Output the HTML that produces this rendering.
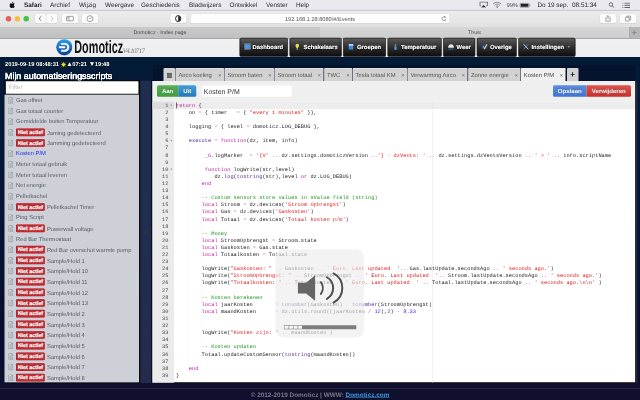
<!DOCTYPE html>
<html lang="nl">
<head>
<meta charset="utf-8">
<title>Domoticz - Index page</title>
<style>
*{box-sizing:border-box;margin:0;padding:0}
html,body{width:640px;height:400px;overflow:hidden;background:#0b1b3a;font-family:"Liberation Sans",sans-serif;text-rendering:geometricPrecision}
i,em{font-style:normal}
#root{position:absolute;left:0;top:0;width:2560px;height:1600px;overflow:hidden;transform:scale(.25);transform-origin:0 0}
#wrap{position:absolute;left:0;top:0;width:640px;height:400px;overflow:hidden;filter:saturate(1.001)}
/* ---------- mac menu bar ---------- */
#menubar{position:absolute;left:0;top:0;width:2560px;height:41.6px;background:#e9e9ef;border-bottom:3.6px solid #d4d4dd}
#menubar span{position:absolute;top:3.6px;font-size:25.6px;line-height:30px;color:#2a2a2e;white-space:nowrap}
#menubar span.b{font-weight:bold;color:#1c1c20}
#menubar svg{position:absolute}
/* ---------- safari toolbar ---------- */
#toolbar{position:absolute;left:0;top:41.6px;width:2560px;height:66.4px;background:linear-gradient(#ececec,#e1e1e1)}
.tbtn{position:absolute;top:14.4px;height:36.8px;background:#fbfbfb;border-radius:7.6px;box-shadow:0 0 0 1.2px #dcdcdc,0 1.6px 2.4px rgba(0,0,0,.22)}
.tbtn svg{position:absolute;left:0;top:0;width:100%;height:100%}
.dot{position:absolute;top:22.4px;width:21.6px;height:21.6px;border-radius:50%}
#url{position:absolute;left:762px;top:14.4px;width:1036px;height:36.8px;background:#fdfdfd;border-radius:7.6px;box-shadow:0 0 0 1.2px #dcdcdc,0 1.6px 2.4px rgba(0,0,0,.22)}
#url span{position:absolute;left:0;width:1036px;text-align:center;top:5.6px;font-size:22.4px;line-height:26.4px;color:#555}
/* ---------- safari tab bar ---------- */
#tabbar{position:absolute;left:0;top:108px;width:2560px;height:44px;background:linear-gradient(#c9c9c9,#c0c0c0)}
#tabbar span{position:absolute;top:8px;font-size:21.2px;line-height:26px;color:#4a4a4a;white-space:nowrap;text-align:center}
/* ---------- page header ---------- */
#hdr{position:absolute;left:0;top:152px;width:2560px;height:76px;background:linear-gradient(#f1f1f1,#eeeeee);border-top:2.4px solid #c9c9c9}
.nav{position:absolute;top:-2.4px;height:74.4px;border-radius:6.4px;background:linear-gradient(#5c5c5c 0%,#474747 22%,#2e2e2e 52%,#1a1a1a 80%,#0e0e0e 100%);box-shadow:inset 0 0 0 2.4px #1c1c1c,0 0 0 1.2px #222}
.nav b{position:absolute;top:22.4px;font-size:23.4px;line-height:28px;color:#fff;white-space:nowrap;text-shadow:0 0 6px #000,0 2.4px 4px #000;-webkit-text-stroke:0.6px #fff}
.nav svg{position:absolute;left:17.6px;top:21.6px;width:26px;height:28px}
#logo{position:absolute;left:224px;top:2.4px;width:66.4px;height:66.4px}
#brand{position:absolute;left:296.8px;top:-1.6px;font-size:72px;line-height:72px;font-weight:bold;color:#111;transform:scaleX(0.6);transform-origin:0 0;letter-spacing:0.4px;white-space:nowrap}
#ver{position:absolute;left:491.2px;top:36px;font-family:"Liberation Serif",serif;font-style:italic;font-size:27.2px;letter-spacing:-2.4px;line-height:28px;color:#777;white-space:nowrap}
/* ---------- body ---------- */
#main{position:absolute;left:0;top:228px;width:2560px;height:1372px;background:linear-gradient(#041b37 0%,#041637 42%,#0a0d2f 84%,#10102e 100%)}
#clock{position:absolute;left:20px;top:241.6px;font-size:23px;line-height:28px;font-weight:bold;color:#fff;white-space:nowrap;text-shadow:0 0 4px #000}
.tri{font-size:26.4px;letter-spacing:-1.6px}
#ttl{position:absolute;left:20px;top:283.6px;font-size:35.6px;line-height:42px;color:#fff;-webkit-text-stroke:1px #fff;white-space:nowrap;text-shadow:0 0 2px #fff,0 0 2px #fff,1.6px 1.6px 3.2px #000}
#filter{position:absolute;left:20px;top:322.4px;width:536.8px;height:56px;background:rgba(255,255,255,.996);border:3.2px solid #0a0a0a;border-radius:2px}
#filter span{position:absolute;left:12px;top:8.8px;font-size:24.8px;line-height:28px;color:#bcbcbc}
#list{position:absolute;left:20px;top:377.6px;width:536.8px;height:1153.2px;background:#d1d3db;overflow:hidden}
.it{position:absolute;left:0;width:2560px;height:42.668px;white-space:nowrap}
.it .fi{position:absolute;left:32.8px;top:8.8px;width:20px;height:26.4px}
.it span{position:absolute;top:6.4px;font-size:23.12px;line-height:28px;color:#555a63}
.it .t1{left:64px}
.it .t1.act{color:#1a2cf0}
.it .t2{left:187.6px;margin-top:1.6px}
.it .na{position:absolute;left:64.4px;top:6.4px;width:114.8px;height:30.8px;border-radius:5.2px;background:rgba(198,45,53,.996);box-shadow:inset 0 0 0 2.4px #a91d24;color:#fff;font-size:21.2px;line-height:32.4px;-webkit-text-stroke:0.8px #fff;text-align:center;font-weight:bold;text-shadow:0 -1.2px 0 rgba(0,0,0,.3)}
#split{position:absolute;left:560.8px;top:321.6px;width:44px;height:1211.6px;background:linear-gradient(#1f2e4f 0%,#1f2d4e 55%,#262b4c 100%)}
#rstrip{position:absolute;left:2544px;top:324px;width:6.4px;height:1208px;background:rgba(255,255,255,.09)}
#split i{position:absolute;left:13.6px;top:590.4px;font-size:28px;line-height:32px;color:#3c3a3c;font-weight:bold}
/* ---------- editor ---------- */
#tabrow{position:absolute;left:612px;top:260px;width:1928.8px;height:64.8px;background:#04142f}
#tlist{position:absolute;left:654.4px;top:272px;width:45.6px;height:52.8px;background:#d4d4d4;border-radius:4px 4px 0 0}
.tab{position:absolute;top:272px;height:52.8px;background:#d2d2d2;border-radius:4px 4px 0 0;box-shadow:inset 1.6px 1.6px 0 #eee}
.tab span{position:absolute;left:11.2px;top:15.2px;font-size:23.4px;line-height:26px;color:#555;white-space:nowrap}
.tab em{position:absolute;right:10.4px;top:15.6px;font-size:21.6px;line-height:26px;color:#555}
.tab.on{background:#efefef}
.tab.on span{color:#444}
#tplus{position:absolute;left:2268px;top:272px;width:45.6px;height:52.8px;background:#d2d2d2;border-radius:4px 4px 0 0}
#panel{position:absolute;left:610.4px;top:324px;width:1932.8px;height:1208px;background:#fff;border-right:3.2px solid #000;border-bottom:3.2px solid #000}
#ebar{position:absolute;left:0;top:0;width:100%;height:83.2px;background:#efefef}
#gutter{position:absolute;left:0;top:83.2px;width:85.2px;height:1124px;background:#ebebeb}
#galine{position:absolute;left:0;top:83.2px;width:85.2px;height:28.4px;background:#dcdcdc}
#pm{position:absolute;left:1118.4px;top:83.2px;width:2px;height:1124px;background:#e4e4e4}
.btn{position:absolute;top:341.2px;height:46px;font-size:24.2px;line-height:46px;font-weight:bold;color:#fff;text-align:center;text-shadow:0 -1.2px 1.2px rgba(0,0,0,.35)}
#nm{position:absolute;left:807.2px;top:340.4px;width:361.6px;height:47.2px;background:rgba(255,255,255,.996);border:1.6px solid #e2e2e2;border-radius:5.6px}
#nm span{position:absolute;left:6.8px;top:7.2px;font-size:27.8px;line-height:32px;color:#333}
.gn{position:absolute;left:608.8px;width:64.8px;text-align:right;font-family:"Liberation Mono",monospace;font-size:21.332px;line-height:28.444px;color:#444}
.fold{position:absolute;left:680.8px;width:0;height:0;border-left:4px solid transparent;border-right:4px solid transparent;border-top:5.6px solid #777}
pre.cl{position:absolute;left:704px;font-family:"Liberation Mono",monospace;font-size:21.332px;line-height:28.444px;color:#222;white-space:pre}
.k{color:#c31aa8}.s{color:#e21a1c}.c{color:#1c9a1c}.n{color:#4a1ce0}.f{color:#5a2a98}.o{color:#cf3aae}
.ig{position:absolute;width:1.6px;height:28.444px;background:rgba(0,0,0,.09)}
#cursor{position:absolute;left:703.6px;top:408.8px;width:2px;height:25.6px;background:#000}
/* ---------- HUD ---------- */
#hud{position:absolute;left:1101.6px;top:996.8px;width:354.4px;height:354.4px;border-radius:32px;background:rgba(236,236,236,.64)}
#hud svg{position:absolute;left:0;top:0;width:354.4px;height:354.4px}
/* ---------- footer ---------- */
#foot{position:absolute;left:0;top:1533.6px;width:2560px;height:66.4px;background:none}
#foot div{position:absolute;left:0;top:18.8px;width:2560px;height:2.4px;background:#2c2b3c}
#foot p{position:absolute;left:0;top:32.8px;width:2560px;text-align:center;font-size:25.6px;line-height:28.8px;font-weight:bold;color:#777a86;white-space:nowrap}
#foot p u{color:#3d9be0}
</style>
</head>
<body>
<div id="wrap"><div id="root">
<div id="main"></div>
<div id="menubar">
<svg style="left:38.4px;top:5.6px;width:22.4px;height:28px" viewBox="0 0 16 20"><path d="M11.2 0.3c.1 1.2-.4 2.4-1.100 3.200-.8.9-1.900 1.500-3 1.400-.1-1.200.5-2.400 1.100-3.100.8-.9 2.100-1.500 3-1.500zM14.700 7c-.7.400-2.100 1.400-2.100 3.400 0 2.400 2.100 3.200 2.500 3.400-.1.200-.4 1.400-1.300 2.700-.8 1.100-1.600 2.300-2.900 2.300-1.200 0-1.600-.7-3-.7s-1.900.7-3 .8c-1.200 0-2.200-1.200-3-2.400C.3 14.200-.9 10.200.8 7.500c.8-1.400 2.300-2.200 3.800-2.200 1.200 0 2.300.8 3 .8s2-1 3.500-.9c.6 0 2.300.2 3.600 1.800z" fill="#111"/></svg>
<span class="b" style="left:96px">Safari</span>
<span style="left:200px">Archief</span>
<span style="left:316px">Wijzig</span>
<span style="left:420px">Weergave</span>
<span style="left:564px">Geschiedenis</span>
<span style="left:756px">Bladwijzers</span>
<span style="left:918px">Ontwikkel</span>
<span style="left:1064px">Venster</span>
<span style="left:1184px">Help</span>
<svg style="left:1916.8px;top:5.6px;width:35.2px;height:25.6px" viewBox="0 0 16 14" preserveAspectRatio="none"><path d="M3 9.500H1.200V1.200h13.600v8.300H13" fill="none" stroke="#333" stroke-width="1.300"/><path d="M8 7.500l4.800 5.800H3.200z" fill="#333"/></svg>
<svg style="left:1969.6px;top:5.6px;width:37.6px;height:26.4px" viewBox="0 0 18 14" preserveAspectRatio="none"><path d="M1 5.200a11 11 0 0 1 16 0M3.600 8a7.400 7.400 0 0 1 10.800 0M6.300 10.700a3.800 3.800 0 0 1 5.400 0" fill="none" stroke="#7a7a7a" stroke-width="1.600"/><circle cx="9" cy="12.600" r="1.200" fill="#7a7a7a"/></svg>
<span style="left:2026.4px;color:#444;font-size:23.6px;letter-spacing:-0.8px">99%</span>
<svg style="left:2078.4px;top:11.2px;width:44.8px;height:20px" viewBox="0 0 24 11"><rect x=".6" y=".6" width="20.300" height="9.800" rx="2" fill="none" stroke="#555" stroke-width="1.100"/><rect x="2.200" y="2.200" width="17" height="6.600" rx=".8" fill="#222"/><path d="M22.300 3.600v3.800c1-.3 1.300-1 1.300-1.900s-.3-1.600-1.300-1.900z" fill="#555"/></svg>
<span style="left:2150px">Do 19 sep.</span>
<span style="left:2288px">08:51:34</span>
<svg style="left:2433.6px;top:8px;width:24px;height:24.8px" viewBox="0 0 14 14"><circle cx="5.600" cy="5.600" r="4.200" fill="none" stroke="#333" stroke-width="1.500"/><path d="M8.800 8.800l4.200 4.200" stroke="#333" stroke-width="1.700"/></svg>
<svg style="left:2488.8px;top:9.6px;width:32px;height:22.4px" viewBox="0 0 18 12"><path d="M0 1h2.200M0 6h2.200M0 11h2.200M5 1h13M5 6h13M5 11h13" stroke="#333" stroke-width="1.700"/></svg>
</div>
<div id="toolbar">
<div class="dot" style="left:23.2px;background:#ee5c54"></div>
<div class="dot" style="left:58.8px;background:#f6bd3b"></div>
<div class="dot" style="left:94.4px;background:#3ec544"></div>
<div class="tbtn" style="left:140px;width:43.2px"><svg viewBox="0 0 10.800 9.400"><path d="M6.400 2.300L3.900 4.700l2.500 2.400" fill="none" stroke="#555" stroke-width=".8"/></svg></div>
<div class="tbtn" style="left:185.2px;width:43.2px"><svg viewBox="0 0 10.800 9.400"><path d="M4.400 2.300l2.500 2.400-2.500 2.400" fill="none" stroke="#b5b5b5" stroke-width=".8"/></svg></div>
<div class="tbtn" style="left:248px;width:64px"><svg viewBox="0 0 16 9.400"><rect x="4.600" y="2.400" width="6.800" height="4.600" rx=".5" fill="none" stroke="#666" stroke-width=".6"/><path d="M7 2.400v4.600M5.200 3.500h1.200M5.200 4.500h1.200" stroke="#666" stroke-width=".5"/></svg></div>
<div class="tbtn" style="left:327.6px;width:64.8px"><svg viewBox="0 0 16.200 9.200"><circle cx="8" cy="4.700" r="3" fill="none" stroke="#666" stroke-width=".6"/><path d="M9.300 3.300L8 4.900l-1-.6" fill="none" stroke="#666" stroke-width=".55"/></svg></div>
<div class="tbtn" style="left:682px;width:62px"><svg viewBox="0 0 15.500 9.400"><ellipse cx="7.700" cy="4.700" rx="2.700" ry="3.100" fill="#fff" stroke="#222" stroke-width="1"/><path d="M7.700 2a2.300 2.700 0 0 1 0 5.400z" fill="#222"/></svg></div>
<div id="url"><span>192.168.1.28:8080/#/Events</span><svg style="position:absolute;left:1002.4px;top:6.8px;width:24px;height:24px" viewBox="0 0 10 10"><path d="M8.200 5a3.200 3.200 0 1 1-1.200-2.500" fill="none" stroke="#666" stroke-width="1"/><path d="M5.800 0.600l2.400 1.800-2.600 1.200z" fill="#666"/></svg></div>
<div class="tbtn" style="left:2400px;width:64px"><svg viewBox="0 0 16 9.400"><path d="M6.600 3.800H5.800v3.600h4.400V3.800H9.400M8 5.400V1.800M6.800 2.800L8 1.600l1.200 1.200" fill="none" stroke="#666" stroke-width=".6"/></svg></div>
<div class="tbtn" style="left:2480px;width:64px"><svg viewBox="0 0 16 9.400"><rect x="5.400" y="3.400" width="3.800" height="3.800" rx=".4" fill="none" stroke="#666" stroke-width=".6"/><path d="M6.800 3.400V2.200h3.800v3.800H9.200" fill="none" stroke="#666" stroke-width=".6"/></svg></div>
</div>
<div id="tabbar">
<div style="position:absolute;left:1280px;top:0;width:1236px;height:44px;background:linear-gradient(#d6d6d6,#cdcdcd)"></div>
<span style="left:0;width:1280px">Domoticz - Index page</span>
<span style="left:1280px;width:1236px">Thuis</span>
<div style="position:absolute;left:2516px;top:0;width:44px;height:42px;background:#b6b6b6;border-left:2px solid #a6a6a6"></div>
<svg style="position:absolute;left:2525.2px;top:12px;width:24px;height:20px" viewBox="0 0 6 5"><path d="M3 0v5M.5 2.500h5" stroke="#6e6e6e" stroke-width=".55" fill="none"/></svg>
</div>
<div id="hdr">
<svg id="logo" viewBox="0 0 40 40"><defs><linearGradient id="lg" x1="0" y1="0" x2="0" y2="1"><stop offset="0" stop-color="#2aa0f0"/><stop offset="1" stop-color="#0a3f96"/></linearGradient></defs><circle cx="20" cy="20" r="19.500" fill="url(#lg)"/><path d="M12 9.500h9.500a10.500 10.500 0 0 1 0 21H12v-4.600h9.300a5.900 5.900 0 0 0 0-11.800H12z" fill="#fff"/><path d="M7 17.700h13.500a2.300 2.300 0 0 1 0 4.600H7z" fill="#fff"/></svg>
<div id="brand">Domoticz</div>
<div id="ver">V4.10717</div>
<div class="nav" style="left:959.2px;width:192px"><svg viewBox="0 0 13 14"><rect x=".5" y="1" width="12" height="11" fill="#3f8fdd" stroke="#c9a56a" stroke-width=".8"/><path d="M1 6.500h11M5 1.500v10" stroke="#7ab8f0" stroke-width=".6"/></svg><b style="left:50.8px">Dashboard</b></div>
<div class="nav" style="left:1158.8px;width:206.8px"><svg viewBox="0 0 13 14"><path d="M6.500 1a3.600 3.600 0 0 1 2 6.600V9.500h-4V7.600A3.600 3.600 0 0 1 6.500 1z" fill="#e6e04a"/><rect x="4.800" y="10" width="3.400" height="3" fill="#9a9a7a"/></svg><b style="left:55.2px">Schakelaars</b></div>
<div class="nav" style="left:1373.2px;width:169.6px"><svg viewBox="0 0 13 14"><rect x="2" y="1.500" width="9" height="11" fill="#3b8be0"/><rect x="2" y="1.500" width="9" height="3.500" fill="#bcd0e6"/></svg><b style="left:54.8px">Groepen</b></div>
<div class="nav" style="left:1551.2px;width:214.4px"><svg viewBox="0 0 13 14"><rect x="5" y="1" width="3" height="9" rx="1.500" fill="#8d7a66"/><rect x="5" y="5.500" width="3" height="5" fill="#4a8fe2"/><circle cx="6.500" cy="10.800" r="2.600" fill="#4a8fe2"/></svg><b style="left:52.8px">Temperatuur</b></div>
<div class="nav" style="left:1773.2px;width:127.2px"><svg viewBox="0 0 13 14"><path d="M.8 9.200a5.700 7 0 0 1 11.400 0z" fill="#e6e9ee"/><path d="M1.500 11.600h10" stroke="#3a9be0" stroke-width="1.800" stroke-dasharray="2.200 1"/></svg><b style="left:52.8px">Weer</b></div>
<div class="nav" style="left:1908px;width:158px"><svg viewBox="0 0 13 14"><circle cx="6.500" cy="7" r="5.600" fill="#27479a"/><path d="M3.200 6.500l3 4 4.800-8.500" fill="none" stroke="#f0d23a" stroke-width="2.400"/><path d="M3.200 6.500l2 2.800" stroke="#4a90e8" stroke-width="2.400"/></svg><b style="left:52px">Overige</b></div>
<div class="nav" style="left:2073.6px;width:227.2px"><svg viewBox="0 0 13 14"><path d="M2 2l9 10" stroke="#e8e8e8" stroke-width="1.800"/><path d="M11 2L2 12" stroke="#4a8fe2" stroke-width="1.800"/></svg><b style="left:52.4px">Instellingen</b><i style="position:absolute;left:196.8px;top:33.6px;width:0;height:0;border-left:5.6px solid transparent;border-right:5.6px solid transparent;border-top:6.4px solid #aaa"></i></div>
</div>

<div style="position:absolute;left:17.6px;top:321.6px;width:594.4px;height:1211.6px;background:#02040c"></div>
<div id="clock">2019-09-19 08:48:31 <svg style="display:inline-block;vertical-align:-4.8px;width:22.4px;height:22.4px" viewBox="0 0 20 20"><circle cx="10" cy="10" r="5" fill="#f5e61a"/><path d="M10 0v20M0 10h20M3 3l14 14M17 3L3 17" stroke="#f5e61a" stroke-width="2.2"/></svg><i class="tri">▲</i>07:21 <i class="tri">▼</i>19:48</div>
<div id="ttl">Mijn automatiseringsscripts</div>
<div id="filter"><span>Filter</span></div>
<div id="split"><i>&lt;</i></div><div id="rstrip"></div>
<div id="list" style="left:0;top:0;width:556.8px;height:1530.8px;background:none">
<div style="position:absolute;left:18.4px;top:378.8px;width:538.4px;height:1150.8px;background:rgba(206,209,216,.996)"></div>
<div class="it" style="top:379.6px"><svg class="fi" viewBox="0 0 12 16"><path d="M1 .5h7l3 3v12H1z" fill="#dfe1e7" stroke="#7c808b" stroke-width="1.5"/><path d="M8 .5v3h3" fill="none" stroke="#7c808b" stroke-width="1"/><path d="M3 5.5h6M3 8h6M3 10.5h6M3 13h6" stroke="#858994" stroke-width="1.3"/></svg><span class="t1">Gas offset</span></div>
<div class="it" style="top:422.28px"><svg class="fi" viewBox="0 0 12 16"><path d="M1 .5h7l3 3v12H1z" fill="#dfe1e7" stroke="#7c808b" stroke-width="1.5"/><path d="M8 .5v3h3" fill="none" stroke="#7c808b" stroke-width="1"/><path d="M3 5.5h6M3 8h6M3 10.5h6M3 13h6" stroke="#858994" stroke-width="1.3"/></svg><span class="t1">Gas totaal counter</span></div>
<div class="it" style="top:464.92px"><svg class="fi" viewBox="0 0 12 16"><path d="M1 .5h7l3 3v12H1z" fill="#dfe1e7" stroke="#7c808b" stroke-width="1.5"/><path d="M8 .5v3h3" fill="none" stroke="#7c808b" stroke-width="1"/><path d="M3 5.5h6M3 8h6M3 10.5h6M3 13h6" stroke="#858994" stroke-width="1.3"/></svg><span class="t1">Gemiddelde buiten Temperatuur</span></div>
<div class="it" style="top:507.6px"><svg class="fi" viewBox="0 0 12 16"><path d="M1 .5h7l3 3v12H1z" fill="#dfe1e7" stroke="#7c808b" stroke-width="1.5"/><path d="M8 .5v3h3" fill="none" stroke="#7c808b" stroke-width="1"/><path d="M3 5.5h6M3 8h6M3 10.5h6M3 13h6" stroke="#858994" stroke-width="1.3"/></svg><b class="na">Niet actief</b><span class="t2">Jaming gedetecteerd</span></div>
<div class="it" style="top:550.28px"><svg class="fi" viewBox="0 0 12 16"><path d="M1 .5h7l3 3v12H1z" fill="#dfe1e7" stroke="#7c808b" stroke-width="1.5"/><path d="M8 .5v3h3" fill="none" stroke="#7c808b" stroke-width="1"/><path d="M3 5.5h6M3 8h6M3 10.5h6M3 13h6" stroke="#858994" stroke-width="1.3"/></svg><b class="na">Niet actief</b><span class="t2">Jamming gedetecteerd</span></div>
<div class="it" style="top:592.96px"><svg class="fi" viewBox="0 0 12 16"><path d="M1 .5h7l3 3v12H1z" fill="#dfe1e7" stroke="#7c808b" stroke-width="1.5"/><path d="M8 .5v3h3" fill="none" stroke="#7c808b" stroke-width="1"/><path d="M3 5.5h6M3 8h6M3 10.5h6M3 13h6" stroke="#858994" stroke-width="1.3"/></svg><span class="t1 act">Kosten P/M</span></div>
<div class="it" style="top:635.6px"><svg class="fi" viewBox="0 0 12 16"><path d="M1 .5h7l3 3v12H1z" fill="#dfe1e7" stroke="#7c808b" stroke-width="1.5"/><path d="M8 .5v3h3" fill="none" stroke="#7c808b" stroke-width="1"/><path d="M3 5.5h6M3 8h6M3 10.5h6M3 13h6" stroke="#858994" stroke-width="1.3"/></svg><span class="t1">Meter totaal gebruik</span></div>
<div class="it" style="top:678.28px"><svg class="fi" viewBox="0 0 12 16"><path d="M1 .5h7l3 3v12H1z" fill="#dfe1e7" stroke="#7c808b" stroke-width="1.5"/><path d="M8 .5v3h3" fill="none" stroke="#7c808b" stroke-width="1"/><path d="M3 5.5h6M3 8h6M3 10.5h6M3 13h6" stroke="#858994" stroke-width="1.3"/></svg><span class="t1">Meter totaal leveren</span></div>
<div class="it" style="top:720.96px"><svg class="fi" viewBox="0 0 12 16"><path d="M1 .5h7l3 3v12H1z" fill="#dfe1e7" stroke="#7c808b" stroke-width="1.5"/><path d="M8 .5v3h3" fill="none" stroke="#7c808b" stroke-width="1"/><path d="M3 5.5h6M3 8h6M3 10.5h6M3 13h6" stroke="#858994" stroke-width="1.3"/></svg><span class="t1">Net energie</span></div>
<div class="it" style="top:763.6px"><svg class="fi" viewBox="0 0 12 16"><path d="M1 .5h7l3 3v12H1z" fill="#dfe1e7" stroke="#7c808b" stroke-width="1.5"/><path d="M8 .5v3h3" fill="none" stroke="#7c808b" stroke-width="1"/><path d="M3 5.5h6M3 8h6M3 10.5h6M3 13h6" stroke="#858994" stroke-width="1.3"/></svg><span class="t1">Pelletkachel</span></div>
<div class="it" style="top:806.28px"><svg class="fi" viewBox="0 0 12 16"><path d="M1 .5h7l3 3v12H1z" fill="#dfe1e7" stroke="#7c808b" stroke-width="1.5"/><path d="M8 .5v3h3" fill="none" stroke="#7c808b" stroke-width="1"/><path d="M3 5.5h6M3 8h6M3 10.5h6M3 13h6" stroke="#858994" stroke-width="1.3"/></svg><b class="na">Niet actief</b><span class="t2">Pelletkachel Timer</span></div>
<div class="it" style="top:848.96px"><svg class="fi" viewBox="0 0 12 16"><path d="M1 .5h7l3 3v12H1z" fill="#dfe1e7" stroke="#7c808b" stroke-width="1.5"/><path d="M8 .5v3h3" fill="none" stroke="#7c808b" stroke-width="1"/><path d="M3 5.5h6M3 8h6M3 10.5h6M3 13h6" stroke="#858994" stroke-width="1.3"/></svg><span class="t1">Ping Script</span></div>
<div class="it" style="top:891.6px"><svg class="fi" viewBox="0 0 12 16"><path d="M1 .5h7l3 3v12H1z" fill="#dfe1e7" stroke="#7c808b" stroke-width="1.5"/><path d="M8 .5v3h3" fill="none" stroke="#7c808b" stroke-width="1"/><path d="M3 5.5h6M3 8h6M3 10.5h6M3 13h6" stroke="#858994" stroke-width="1.3"/></svg><b class="na">Niet actief</b><span class="t2">Powerwall voltage</span></div>
<div class="it" style="top:934.28px"><svg class="fi" viewBox="0 0 12 16"><path d="M1 .5h7l3 3v12H1z" fill="#dfe1e7" stroke="#7c808b" stroke-width="1.5"/><path d="M8 .5v3h3" fill="none" stroke="#7c808b" stroke-width="1"/><path d="M3 5.5h6M3 8h6M3 10.5h6M3 13h6" stroke="#858994" stroke-width="1.3"/></svg><span class="t1">Red Bar Thermostaat</span></div>
<div class="it" style="top:976.96px"><svg class="fi" viewBox="0 0 12 16"><path d="M1 .5h7l3 3v12H1z" fill="#dfe1e7" stroke="#7c808b" stroke-width="1.5"/><path d="M8 .5v3h3" fill="none" stroke="#7c808b" stroke-width="1"/><path d="M3 5.5h6M3 8h6M3 10.5h6M3 13h6" stroke="#858994" stroke-width="1.3"/></svg><b class="na">Niet actief</b><span class="t2">Red Bar overschot warmte pomp</span></div>
<div class="it" style="top:1019.64px"><svg class="fi" viewBox="0 0 12 16"><path d="M1 .5h7l3 3v12H1z" fill="#dfe1e7" stroke="#7c808b" stroke-width="1.5"/><path d="M8 .5v3h3" fill="none" stroke="#7c808b" stroke-width="1"/><path d="M3 5.5h6M3 8h6M3 10.5h6M3 13h6" stroke="#858994" stroke-width="1.3"/></svg><b class="na">Niet actief</b><span class="t2">Sample/Hold 1</span></div>
<div class="it" style="top:1062.28px"><svg class="fi" viewBox="0 0 12 16"><path d="M1 .5h7l3 3v12H1z" fill="#dfe1e7" stroke="#7c808b" stroke-width="1.5"/><path d="M8 .5v3h3" fill="none" stroke="#7c808b" stroke-width="1"/><path d="M3 5.5h6M3 8h6M3 10.5h6M3 13h6" stroke="#858994" stroke-width="1.3"/></svg><b class="na">Niet actief</b><span class="t2">Sample/Hold 10</span></div>
<div class="it" style="top:1104.96px"><svg class="fi" viewBox="0 0 12 16"><path d="M1 .5h7l3 3v12H1z" fill="#dfe1e7" stroke="#7c808b" stroke-width="1.5"/><path d="M8 .5v3h3" fill="none" stroke="#7c808b" stroke-width="1"/><path d="M3 5.5h6M3 8h6M3 10.5h6M3 13h6" stroke="#858994" stroke-width="1.3"/></svg><b class="na">Niet actief</b><span class="t2">Sample/Hold 11</span></div>
<div class="it" style="top:1147.64px"><svg class="fi" viewBox="0 0 12 16"><path d="M1 .5h7l3 3v12H1z" fill="#dfe1e7" stroke="#7c808b" stroke-width="1.5"/><path d="M8 .5v3h3" fill="none" stroke="#7c808b" stroke-width="1"/><path d="M3 5.5h6M3 8h6M3 10.5h6M3 13h6" stroke="#858994" stroke-width="1.3"/></svg><b class="na">Niet actief</b><span class="t2">Sample/Hold 12</span></div>
<div class="it" style="top:1190.28px"><svg class="fi" viewBox="0 0 12 16"><path d="M1 .5h7l3 3v12H1z" fill="#dfe1e7" stroke="#7c808b" stroke-width="1.5"/><path d="M8 .5v3h3" fill="none" stroke="#7c808b" stroke-width="1"/><path d="M3 5.5h6M3 8h6M3 10.5h6M3 13h6" stroke="#858994" stroke-width="1.3"/></svg><b class="na">Niet actief</b><span class="t2">Sample/Hold 13</span></div>
<div class="it" style="top:1232.96px"><svg class="fi" viewBox="0 0 12 16"><path d="M1 .5h7l3 3v12H1z" fill="#dfe1e7" stroke="#7c808b" stroke-width="1.5"/><path d="M8 .5v3h3" fill="none" stroke="#7c808b" stroke-width="1"/><path d="M3 5.5h6M3 8h6M3 10.5h6M3 13h6" stroke="#858994" stroke-width="1.3"/></svg><b class="na">Niet actief</b><span class="t2">Sample/Hold 2</span></div>
<div class="it" style="top:1275.64px"><svg class="fi" viewBox="0 0 12 16"><path d="M1 .5h7l3 3v12H1z" fill="#dfe1e7" stroke="#7c808b" stroke-width="1.5"/><path d="M8 .5v3h3" fill="none" stroke="#7c808b" stroke-width="1"/><path d="M3 5.5h6M3 8h6M3 10.5h6M3 13h6" stroke="#858994" stroke-width="1.3"/></svg><b class="na">Niet actief</b><span class="t2">Sample/Hold 3</span></div>
<div class="it" style="top:1318.28px"><svg class="fi" viewBox="0 0 12 16"><path d="M1 .5h7l3 3v12H1z" fill="#dfe1e7" stroke="#7c808b" stroke-width="1.5"/><path d="M8 .5v3h3" fill="none" stroke="#7c808b" stroke-width="1"/><path d="M3 5.5h6M3 8h6M3 10.5h6M3 13h6" stroke="#858994" stroke-width="1.3"/></svg><b class="na">Niet actief</b><span class="t2">Sample/Hold 4</span></div>
<div class="it" style="top:1360.96px"><svg class="fi" viewBox="0 0 12 16"><path d="M1 .5h7l3 3v12H1z" fill="#dfe1e7" stroke="#7c808b" stroke-width="1.5"/><path d="M8 .5v3h3" fill="none" stroke="#7c808b" stroke-width="1"/><path d="M3 5.5h6M3 8h6M3 10.5h6M3 13h6" stroke="#858994" stroke-width="1.3"/></svg><b class="na">Niet actief</b><span class="t2">Sample/Hold 5</span></div>
<div class="it" style="top:1403.64px"><svg class="fi" viewBox="0 0 12 16"><path d="M1 .5h7l3 3v12H1z" fill="#dfe1e7" stroke="#7c808b" stroke-width="1.5"/><path d="M8 .5v3h3" fill="none" stroke="#7c808b" stroke-width="1"/><path d="M3 5.5h6M3 8h6M3 10.5h6M3 13h6" stroke="#858994" stroke-width="1.3"/></svg><b class="na">Niet actief</b><span class="t2">Sample/Hold 6</span></div>
<div class="it" style="top:1446.32px"><svg class="fi" viewBox="0 0 12 16"><path d="M1 .5h7l3 3v12H1z" fill="#dfe1e7" stroke="#7c808b" stroke-width="1.5"/><path d="M8 .5v3h3" fill="none" stroke="#7c808b" stroke-width="1"/><path d="M3 5.5h6M3 8h6M3 10.5h6M3 13h6" stroke="#858994" stroke-width="1.3"/></svg><b class="na">Niet actief</b><span class="t2">Sample/Hold 7</span></div>
<div class="it" style="top:1488.96px"><svg class="fi" viewBox="0 0 12 16"><path d="M1 .5h7l3 3v12H1z" fill="#dfe1e7" stroke="#7c808b" stroke-width="1.5"/><path d="M8 .5v3h3" fill="none" stroke="#7c808b" stroke-width="1"/><path d="M3 5.5h6M3 8h6M3 10.5h6M3 13h6" stroke="#858994" stroke-width="1.3"/></svg><b class="na">Niet actief</b><span class="t2">Sample/Hold 8</span></div>

</div>

<div id="tabrow"></div>
<div id="tlist"><svg style="position:absolute;left:12.8px;top:19.2px;width:20.8px;height:20.8px" viewBox="0 0 10 10"><rect width="10" height="10" fill="#5c5c5c"/><path d="M0 3h10M0 5.300h10M0 7.600h10" stroke="#999" stroke-width=".7"/></svg></div>
<div class="tab" style="left:702.4px;width:193.6px"><span>Airco koeling</span><em>×</em></div>
<div class="tab" style="left:898.4px;width:197.6px"><span>Stroom baten</span><em>×</em></div>
<div class="tab" style="left:1098.4px;width:196px"><span>Stroom totaal</span><em>×</em></div>
<div class="tab" style="left:1296.8px;width:112px"><span>TWC</span><em>×</em></div>
<div class="tab" style="left:1411.2px;width:216.8px"><span>Tesla totaal KM</span><em>×</em></div>
<div class="tab" style="left:1630.4px;width:240px"><span>Verwarming Airco</span><em>×</em></div>
<div class="tab" style="left:1872.8px;width:208.8px"><span>Zonne energie</span><em>×</em></div>
<div class="tab on" style="left:2084px;width:178.4px"><span>Kosten P/M</span><em>×</em></div>

<div id="tplus"><b style="position:absolute;left:12.8px;top:10.4px;font-size:32px;line-height:32px;color:#111">+</b></div>
<div id="panel">
<div id="ebar"></div>
<div id="gutter"></div>
<div id="galine"></div>
<div style="position:absolute;left:85.2px;top:83.2px;width:1844.8px;height:28.4px;background:#ededed"></div>
<div id="pm"></div>
</div>
<div class="btn" style="left:628px;width:84.8px;background:linear-gradient(rgba(86,176,86,.996),rgba(63,154,63,.996));border-radius:6.4px 0 0 6.4px">Aan</div>
<div class="btn" style="left:712.8px;width:72px;background:linear-gradient(rgba(63,160,216,.996),rgba(33,120,184,.996));border-radius:0 6.4px 6.4px 0">Uit</div>
<div id="nm"><span>Kosten P/M</span></div>
<div class="btn" style="left:2212px;width:134.4px;background:linear-gradient(rgba(91,141,224,.996),rgba(63,115,207,.996));border-radius:6.4px 0 0 6.4px">Opslaan</div>
<div class="btn" style="left:2346.4px;width:177.6px;background:linear-gradient(rgba(224,82,76,.996),rgba(196,48,44,.996));border-radius:0 6.4px 6.4px 0">Verwijderen</div>
<div class="gn" style="top:407.4px">1</div>
<div class="gn" style="top:435.84px">2</div>
<div class="gn" style="top:464.28px">3</div>
<div class="gn" style="top:492.72px">4</div>
<div class="gn" style="top:521.16px">5</div>
<div class="gn" style="top:549.64px">6</div>
<div class="gn" style="top:578.08px">7</div>
<div class="gn" style="top:606.52px">8</div>
<div class="gn" style="top:634.96px">9</div>
<div class="gn" style="top:663.4px">10</div>
<div class="gn" style="top:691.84px">11</div>
<div class="gn" style="top:720.28px">12</div>
<div class="gn" style="top:748.72px">13</div>
<div class="gn" style="top:777.16px">14</div>
<div class="gn" style="top:805.6px">15</div>
<div class="gn" style="top:834.04px">16</div>
<div class="gn" style="top:862.52px">17</div>
<div class="gn" style="top:890.96px">18</div>
<div class="gn" style="top:919.4px">19</div>
<div class="gn" style="top:947.84px">20</div>
<div class="gn" style="top:976.28px">21</div>
<div class="gn" style="top:1004.72px">22</div>
<div class="gn" style="top:1033.16px">23</div>
<div class="gn" style="top:1061.6px">24</div>
<div class="gn" style="top:1090.04px">25</div>
<div class="gn" style="top:1118.48px">26</div>
<div class="gn" style="top:1146.96px">27</div>
<div class="gn" style="top:1175.4px">28</div>
<div class="gn" style="top:1203.84px">29</div>
<div class="gn" style="top:1232.28px">30</div>
<div class="gn" style="top:1260.72px">31</div>
<div class="gn" style="top:1289.16px">32</div>
<div class="gn" style="top:1317.6px">33</div>
<div class="gn" style="top:1346.04px">34</div>
<div class="gn" style="top:1374.48px">35</div>
<div class="gn" style="top:1402.96px">36</div>
<div class="gn" style="top:1431.4px">37</div>
<div class="gn" style="top:1459.84px">38</div>
<div class="gn" style="top:1488.28px">39</div>

<div class="fold" style="top:418.6px"></div><div class="fold" style="top:560.84px"></div><div class="fold" style="top:674.6px"></div><div class="ig" style="left:753.6px;top:435.44px"></div><div class="ig" style="left:753.6px;top:492.32px"></div><div class="ig" style="left:753.6px;top:549.24px"></div><div class="ig" style="left:753.6px;top:577.68px"></div><div class="ig" style="left:804.8px;top:577.68px"></div><div class="ig" style="left:753.6px;top:606.12px"></div><div class="ig" style="left:804.8px;top:606.12px"></div><div class="ig" style="left:753.6px;top:634.56px"></div><div class="ig" style="left:804.8px;top:634.56px"></div><div class="ig" style="left:753.6px;top:663px"></div><div class="ig" style="left:804.8px;top:663px"></div><div class="ig" style="left:753.6px;top:691.44px"></div><div class="ig" style="left:804.8px;top:691.44px"></div><div class="ig" style="left:856px;top:691.44px"></div><div class="ig" style="left:753.6px;top:719.88px"></div><div class="ig" style="left:804.8px;top:719.88px"></div><div class="ig" style="left:753.6px;top:748.32px"></div><div class="ig" style="left:804.8px;top:748.32px"></div><div class="ig" style="left:753.6px;top:776.76px"></div><div class="ig" style="left:804.8px;top:776.76px"></div><div class="ig" style="left:753.6px;top:805.2px"></div><div class="ig" style="left:804.8px;top:805.2px"></div><div class="ig" style="left:753.6px;top:833.64px"></div><div class="ig" style="left:804.8px;top:833.64px"></div><div class="ig" style="left:753.6px;top:862.12px"></div><div class="ig" style="left:804.8px;top:862.12px"></div><div class="ig" style="left:753.6px;top:890.56px"></div><div class="ig" style="left:804.8px;top:890.56px"></div><div class="ig" style="left:753.6px;top:919px"></div><div class="ig" style="left:804.8px;top:919px"></div><div class="ig" style="left:753.6px;top:947.44px"></div><div class="ig" style="left:804.8px;top:947.44px"></div><div class="ig" style="left:753.6px;top:975.88px"></div><div class="ig" style="left:804.8px;top:975.88px"></div><div class="ig" style="left:753.6px;top:1004.32px"></div><div class="ig" style="left:804.8px;top:1004.32px"></div><div class="ig" style="left:753.6px;top:1032.76px"></div><div class="ig" style="left:804.8px;top:1032.76px"></div><div class="ig" style="left:753.6px;top:1061.2px"></div><div class="ig" style="left:804.8px;top:1061.2px"></div><div class="ig" style="left:753.6px;top:1089.64px"></div><div class="ig" style="left:804.8px;top:1089.64px"></div><div class="ig" style="left:753.6px;top:1118.08px"></div><div class="ig" style="left:804.8px;top:1118.08px"></div><div class="ig" style="left:753.6px;top:1146.56px"></div><div class="ig" style="left:804.8px;top:1146.56px"></div><div class="ig" style="left:753.6px;top:1175px"></div><div class="ig" style="left:804.8px;top:1175px"></div><div class="ig" style="left:753.6px;top:1203.44px"></div><div class="ig" style="left:804.8px;top:1203.44px"></div><div class="ig" style="left:753.6px;top:1231.88px"></div><div class="ig" style="left:804.8px;top:1231.88px"></div><div class="ig" style="left:753.6px;top:1260.32px"></div><div class="ig" style="left:804.8px;top:1260.32px"></div><div class="ig" style="left:753.6px;top:1288.76px"></div><div class="ig" style="left:804.8px;top:1288.76px"></div><div class="ig" style="left:753.6px;top:1317.2px"></div><div class="ig" style="left:804.8px;top:1317.2px"></div><div class="ig" style="left:753.6px;top:1345.64px"></div><div class="ig" style="left:804.8px;top:1345.64px"></div><div class="ig" style="left:753.6px;top:1374.08px"></div><div class="ig" style="left:804.8px;top:1374.08px"></div><div class="ig" style="left:753.6px;top:1402.52px"></div><div class="ig" style="left:804.8px;top:1402.52px"></div><div class="ig" style="left:753.6px;top:1431px"></div><div class="ig" style="left:804.8px;top:1431px"></div><div class="ig" style="left:753.6px;top:1459.44px"></div>
<pre class="cl" style="top:407.4px"><i class="k">return</i> {</pre>
<pre class="cl" style="top:435.84px">    on <i class="o">=</i> { timer   <i class="o">=</i> { <i class="s">&quot;every 1 minutes&quot;</i> }},</pre>
<pre class="cl" style="top:492.72px">    logging <i class="o">=</i> { level <i class="o">=</i> domoticz.LOG_DEBUG },</pre>
<pre class="cl" style="top:549.64px">    <i class="f">execute</i> <i class="o">=</i> <i class="k">function</i>(dz, item, info)</pre>
<pre class="cl" style="top:606.52px">         <i class="k">_G</i>.logMarker  <i class="o">=</i> <i class="s">&#x27;{V&#x27;</i> <i class="o">..</i> dz.settings.domoticzVersion <i class="o">..</i><i class="s">&#x27;} - dzVents: &#x27;</i> <i class="o">..</i> dz.settings.dzVentsVersion <i class="o">..</i> <i class="s">&#x27; &gt; &#x27;</i> <i class="o">..</i> info.scriptName</pre>
<pre class="cl" style="top:663.4px">         <i class="k">function</i> logWrite(str,level)</pre>
<pre class="cl" style="top:691.84px">            dz.<i class="f">log</i>(<i class="f">tostring</i>(str),level <i class="k">or</i> dz.LOG_DEBUG)</pre>
<pre class="cl" style="top:720.28px">        <i class="k">end</i></pre>
<pre class="cl" style="top:777.16px">        <i class="c">-- Custom sensors store values in sValue field (string)</i></pre>
<pre class="cl" style="top:805.6px">        <i class="k">local</i> Stroom <i class="o">=</i> dz.devices(<i class="s">&#x27;Stroom Opbrengst&#x27;</i>)</pre>
<pre class="cl" style="top:834.04px">        <i class="k">local</i> Gas <i class="o">=</i> dz.devices(<i class="s">&#x27;Gaskosten&#x27;</i>)</pre>
<pre class="cl" style="top:862.52px">        <i class="k">local</i> Totaal <i class="o">=</i> dz.devices(<i class="s">&#x27;Totaal kosten p/m&#x27;</i>)</pre>
<pre class="cl" style="top:919.4px">        <i class="c">-- Money</i></pre>
<pre class="cl" style="top:947.84px">        <i class="k">local</i> StroomOpbrengst <i class="o">=</i> Stroom.state</pre>
<pre class="cl" style="top:976.28px">        <i class="k">local</i> Gaskosten <i class="o">=</i> Gas.state</pre>
<pre class="cl" style="top:1004.72px">        <i class="k">local</i> Totaalkosten <i class="o">=</i> Totaal.state</pre>
<pre class="cl" style="top:1061.6px">        logWrite(<i class="s">&quot;Gaskosten: &quot;</i> <i class="o">..</i> Gaskosten <i class="o">..</i> <i class="s">&#x27; Euro. Last updated  &#x27;</i><i class="o">..</i> Gas.lastUpdate.secondsAgo <i class="o">..</i> <i class="s">&#x27; seconds ago.&#x27;</i>)</pre>
<pre class="cl" style="top:1090.04px">        logWrite(<i class="s">&quot;StroomOpbrengst: &quot;</i> <i class="o">..</i> StroomOpbrengst <i class="o">..</i> <i class="s">&#x27; Euro. Last updated  &#x27;</i><i class="o">..</i> Stroom.lastUpdate.secondsAgo <i class="o">..</i> <i class="s">&#x27; seconds ago.&#x27;</i>)</pre>
<pre class="cl" style="top:1118.48px">        logWrite(<i class="s">&quot;Totaalkosten: &quot;</i> <i class="o">..</i> Totaalkosten <i class="o">..</i> <i class="s">&#x27; Euro. Last updated  &#x27;</i> <i class="o">..</i> Totaal.lastUpdate.secondsAgo <i class="o">..</i> <i class="s">&#x27; seconds ago.\n\n&#x27;</i> )</pre>
<pre class="cl" style="top:1175.4px">        <i class="c">-- Kosten berekenen</i></pre>
<pre class="cl" style="top:1203.84px">        <i class="k">local</i> jaarKosten       <i class="o">=</i> <i class="f">tonumber</i>(Gaskosten) <i class="o">-</i> <i class="f">tonumber</i>(StroomOpbrengst)</pre>
<pre class="cl" style="top:1232.28px">        <i class="k">local</i> maandKosten      <i class="o">=</i> dz.utils.round((jaarKosten <i class="o">/</i> <i class="n">12</i>),<i class="n">2</i>) <i class="o">-</i> <i class="n">8.33</i></pre>
<pre class="cl" style="top:1317.6px">        logWrite(<i class="s">&quot;Kosten zijn: &quot;</i> <i class="o">..</i> maandKosten )</pre>
<pre class="cl" style="top:1374.48px">        <i class="c">-- Kosten updaten</i></pre>
<pre class="cl" style="top:1402.96px">        Totaal.updateCustomSensor(<i class="f">tostring</i>(maandKosten))</pre>
<pre class="cl" style="top:1459.84px">    <i class="k">end</i></pre>
<pre class="cl" style="top:1488.28px">}</pre>

<div id="cursor"></div>

<div id="hud"><svg viewBox="0 0 88.600 88.600"><path d="M22.400 33.400h8.200l9-7.400v25.600l-9-7.400h-8.200z" fill="#666"/><path d="M45.400 33a9.700 9.700 0 0 1 0 11.600M51.400 28a12.500 12.500 0 0 1 0 21.600M58 24.200a16.500 16.500 0 0 1 0 29.200" fill="none" stroke="#505050" stroke-width="2" stroke-linecap="round"/><rect x="8.400" y="76" width="72.400" height="4" fill="#7d7d7d"/><rect x="8.900" y="76.500" width="17.600" height="3" fill="#f4f4f4"/><path d="M13.300 76v4M17.800 76v4M22.300 76v4" stroke="#7d7d7d" stroke-width=".6"/></svg></div>

<div id="foot"><div></div><p>© 2012-2019 Domoticz | WWW: <u>Domoticz.com</u></p></div>
</div></div>
</body>
</html>
